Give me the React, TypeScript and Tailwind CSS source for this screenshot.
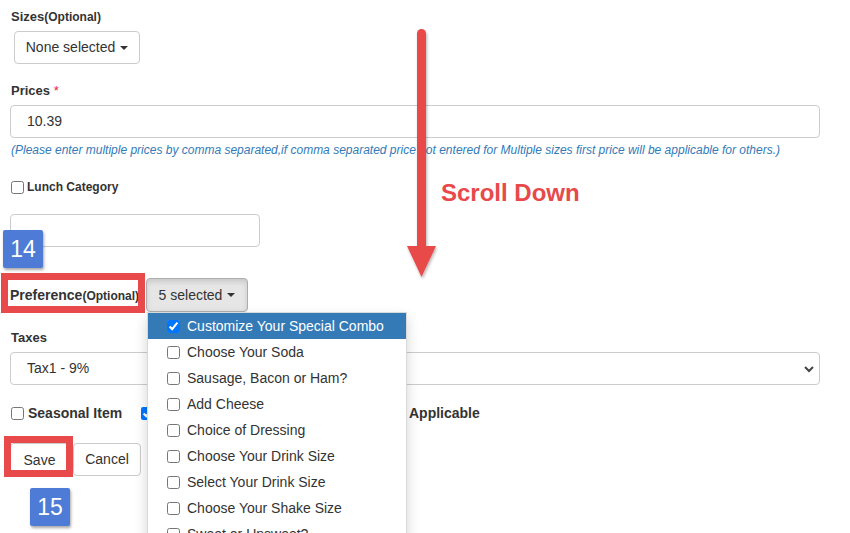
const prefs = [
  "Customize Your Special Combo",
  "Choose Your Soda",
  "Sausage, Bacon or Ham?",
  "Add Cheese",
  "Choice of Dressing",
  "Choose Your Drink Size",
  "Select Your Drink Size",
  "Choose Your Shake Size",
  "Sweet or Unsweet?",
];

function Caret() {
  return (
    <span className="ml-[5px] inline-block w-0 h-0 border-l-[4px] border-r-[4px] border-t-[4px] border-l-transparent border-r-transparent border-t-[#333] align-middle" />
  );
}

function Badge({ n, className }: { n: string; className: string }) {
  return (
    <div
      className={
        "absolute w-[40px] h-[38px] flex items-center justify-center bg-[#4d7bd5] text-white text-[23px] rounded-[2px] shadow-[1px_2px_3px_rgba(0,0,0,0.35)] " +
        className
      }
    >
      {n}
    </div>
  );
}

function Arrow() {
  return (
    <svg className="absolute left-[396px] top-[20px]" width="54" height="270" viewBox="396 20 54 270">
      <defs>
        <filter id="sh" x="-50%" y="-10%" width="200%" height="120%">
          <feDropShadow dx="1" dy="2" stdDeviation="1.5" floodColor="#000" floodOpacity="0.3" />
        </filter>
      </defs>
      <g filter="url(#sh)" fill="#e8494a">
        <rect x="417" y="29" width="9" height="222" rx="4.5" />
        <polygon points="407,246 436,246 421.5,277" />
      </g>
    </svg>
  );
}

export default function App() {
  return (
    <div className="relative w-[850px] h-[533px] overflow-hidden bg-white text-[#333] font-['Liberation_Sans',Arial,sans-serif]">
      <div className="w-[820px] pl-[10px]">
        <div className="mt-[7px] h-[18px] leading-[18px] pl-[1px]">
          <span className="text-[13px] font-bold">Sizes</span>
          <span className="text-[12px] font-bold">(Optional)</span>
        </div>
        <div className="mt-[6px] ml-[4px]">
          <button className="h-[33px] w-[126px] border border-[#ccc] rounded-[4px] bg-white text-[14px] flex items-center justify-center">
            None selected
            <Caret />
          </button>
        </div>

        <div className="mt-[18px] h-[18px] leading-[18px] pl-[1px] text-[13px] font-bold">
          Prices <span className="text-[#e0243a] font-normal">*</span>
        </div>
        <div className="mt-[5px] h-[33px] border border-[#ccc] rounded-[4px] flex items-center pl-[16px] text-[14px]">
          10.39
        </div>
        <div className="mt-[4px] h-[16px] leading-[16px] pl-[1px] text-[12px] italic text-[#337ab7] whitespace-nowrap">
          (Please enter multiple prices by comma separated,if comma separated price not entered for Multiple sizes first price will be applicable for others.)
        </div>

        <div className="mt-[21px] h-[16px] flex items-center pl-[1px]">
          <input type="checkbox" className="w-[13px] h-[13px] m-0" />
          <span className="ml-[3px] text-[12px] font-bold">Lunch Category</span>
        </div>
        <div className="mt-[19px] h-[33px] w-[250px] border border-[#ccc] rounded-[4px]" />

        <div className="mt-[31px] h-[34px] flex items-center">
          <span className="w-[136px] text-[14px] font-bold">
            Preference<span className="text-[12px]">(Optional)</span>
          </span>
          <div className="relative">
            <button className="h-[34px] w-[102px] border border-[#adadad] rounded-[4px] bg-[#e6e6e6] shadow-[inset_0_3px_5px_rgba(0,0,0,0.125)] text-[14px] flex items-center justify-center">
              5 selected
              <Caret />
            </button>
            <div className="absolute left-[1px] top-[34px] w-[260px] bg-white border border-[rgba(0,0,0,0.15)] shadow-[0_6px_12px_rgba(0,0,0,0.175)] z-10">
              {prefs.map((p, i) => (
                <div
                  key={p}
                  className={
                    "h-[26px] flex items-center pl-[19px] text-[14px] " +
                    (i === 0 ? "bg-[#337ab7] text-white" : "text-[#333]")
                  }
                >
                  <input type="checkbox" defaultChecked={i === 0} className="w-[13px] h-[13px] m-0" />
                  <span className="ml-[7px]">{p}</span>
                </div>
              ))}
            </div>
          </div>
        </div>

        <div className="mt-[17px] h-[18px] leading-[18px] pl-[1px] text-[13px] font-bold">Taxes</div>
        <div className="mt-[5px] h-[33px] border border-[#ccc] rounded-[4px] flex items-center justify-between pl-[16px] pr-[4px] text-[14px]">
          <span>Tax1 - 9%</span>
          <svg width="12" height="10" viewBox="0 0 12 10">
            <path d="M2 3 L6 7 L10 3" fill="none" stroke="#444" strokeWidth="2" />
          </svg>
        </div>

        <div className="mt-[20px] h-[16px] flex items-center pl-[1px] text-[14px] font-bold">
          <input type="checkbox" className="w-[13px] h-[13px] m-0" />
          <span className="ml-[4px] w-[113px]">Seasonal Item</span>
          <input type="checkbox" defaultChecked className="w-[13px] h-[13px] m-0" />
          <span className="ml-[4px] w-[251px]" />
          <span>Applicable</span>
        </div>

        <div className="mt-[22px] flex items-start">
          <button className="h-[34px] w-[63px] pr-[4px] border border-[#ccc] rounded-[4px] bg-white text-[14px]">Save</button>
          <button className="h-[33px] w-[68px] border border-[#ccc] rounded-[4px] bg-white text-[14px]">Cancel</button>
        </div>
      </div>

      <div className="absolute left-[1px] top-[273px] w-[144px] h-[40px] border-[7px] border-[#e8494a]" />
      <div className="absolute left-[4px] top-[436px] w-[69px] h-[41px] border-[7px] border-[#e8494a]" />

      <Badge n="14" className="left-[3px] top-[230px]" />
      <Badge n="15" className="left-[30px] top-[488px]" />

      <Arrow />
      <div className="absolute left-[441px] top-[178px] text-[24px] font-bold text-[#e8494a] leading-[30px]">
        Scroll Down
      </div>
    </div>
  );
}
